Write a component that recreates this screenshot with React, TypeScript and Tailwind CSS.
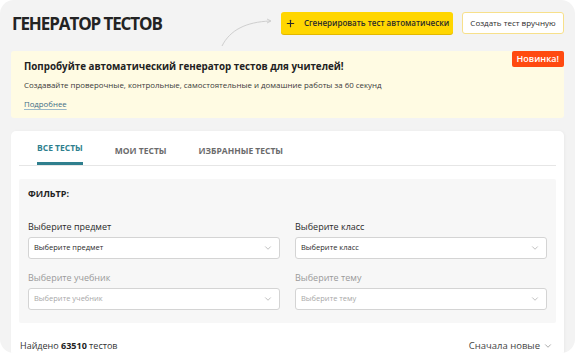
import React from 'react';
import { Plus, ChevronDown } from 'lucide-react';

const font = { fontFamily: '"Open Sans", "Noto Sans", sans-serif' };

const Select: React.FC<{ label: string; placeholder: string; disabled?: boolean }> = ({ label, placeholder, disabled }) => (
  <div className="flex flex-col">
    <div className={`text-[9px] leading-[13px] ${disabled ? 'text-[#9a9a9a]' : 'text-[#2b2b2b]'}`}>{label}</div>
    <div className="mt-[4px] h-[22px] bg-white border border-[#d4d4d4] rounded-[3px] flex items-center justify-between pl-[5px] pr-[6px]">
      <span className={`text-[7.5px] whitespace-nowrap ${disabled ? 'text-[#a8a8a8]' : 'text-[#2b2b2b]'}`}>{placeholder}</span>
      <ChevronDown size={10} strokeWidth={1.5} className="text-[#9a9a9a]" />
    </div>
  </div>
);

export default function App() {
  const tabs = ['ВСЕ ТЕСТЫ', 'МОИ ТЕСТЫ', 'ИЗБРАННЫЕ ТЕСТЫ'];

  return (
    <div className="w-[575px] h-[353px] bg-white" style={font}>
      <div className="relative h-full rounded-[14px] bg-[#f3f3f3] overflow-hidden px-[11px] pt-[12px]">
        {/* header */}
        <div className="flex items-center h-[22px]">
          <h1 className="pl-[1px] text-[17px] font-bold text-[#232323] leading-none tracking-[-1.1px] whitespace-nowrap">ГЕНЕРАТОР ТЕСТОВ</h1>
          <div className="ml-auto flex items-center gap-[9px]">
            <button className="h-[22px] w-[172px] rounded-[3px] bg-[#ffd600] shadow-[0_1px_0_#e2b800] flex items-center justify-center gap-[8px] text-[8px] font-semibold text-[#2b2b2b] whitespace-nowrap">
              <Plus size={11} strokeWidth={2.5} className="shrink-0" />
              Сгенерировать тест автоматически
            </button>
            <button className="h-[22px] w-[102px] rounded-[3px] bg-white border border-[#f7e08a] flex items-center justify-center text-[8px] text-[#2b2b2b] whitespace-nowrap">
              Создать тест вручную
            </button>
          </div>
        </div>

        <svg className="absolute left-[220px] top-[16px]" width="56" height="32" viewBox="0 0 56 32" fill="none">
          <path d="M2 30 C 10 14, 26 6, 50 5" stroke="#c9c9c9" strokeWidth="0.9" />
          <path d="M47 3 L51 5 L47 7" stroke="#c9c9c9" strokeWidth="0.9" />
        </svg>

        {/* banner */}
        <div className="relative mt-[17px] h-[67px] bg-[#fffbe3] rounded-[3px] pl-[13px] pt-[8px]">
          <div className="text-[9.8px] font-bold text-[#222] leading-[16px]">
            Попробуйте автоматический генератор тестов для учителей!
          </div>
          <div className="mt-[4px] text-[7.9px] text-[#3a3a3a] leading-[12px]">
            Создавайте проверочные, контрольные, самостоятельные и домашние работы за 60 секунд
          </div>
          <div className="mt-[7px] text-[7.8px] text-[#3d6b85] leading-[12px] underline decoration-[#9ab8c8] underline-offset-2">
            Подробнее
          </div>
          <div className="absolute right-0 top-0 h-[16px] px-[5px] bg-[#ff4a10] rounded-[2px] text-white text-[9px] font-semibold flex items-center">
            Новинка!
          </div>
        </div>

        {/* card */}
        <div className="mt-[13px] bg-white rounded-t-[5px] shadow-[1px_0_3px_rgba(0,0,0,0.04)] px-[8px] h-[240px]">
          <div className="flex border-b border-[#e6e6e6] pl-[18px] gap-[32px] h-[35px] items-end">
            {tabs.map((t, i) => (
              <div
                key={t}
                className={`pb-[8px] text-[8.5px] font-bold leading-[12px] ${
                  i === 0 ? 'text-[#2f7f8e] border-b-[3px] border-[#2f7f8e] pb-[5px]' : 'text-[#6b6b6b]'
                }`}
              >
                {t}
              </div>
            ))}
          </div>

          <div className="mt-[13px] bg-[#f7f7f7] rounded-[2px] px-[9px] pt-[8px] pb-[13px]">
            <div className="text-[9px] font-bold text-[#222] leading-[13px]">ФИЛЬТР:</div>
            <div className="mt-[20px] grid grid-cols-2 gap-x-[15px] gap-y-[12px]">
              <Select label="Выберите предмет" placeholder="Выберите предмет" />
              <Select label="Выберите класс" placeholder="Выберите класс" />
              <Select label="Выберите учебник" placeholder="Выберите учебник" disabled />
              <Select label="Выберите тему" placeholder="Выберите тему" disabled />
            </div>
          </div>

          <div className="mt-[16px] flex items-center justify-between pl-[1px] pr-[3px]">
            <div className="text-[9px] text-[#333]">
              Найдено <span className="font-bold text-[#222]">63510</span> тестов
            </div>
            <div className="flex items-center gap-[3px] text-[9.5px] text-[#444]">
              Сначала новые
              <ChevronDown size={10} strokeWidth={1.5} className="text-[#777]" />
            </div>
          </div>
        </div>
      </div>
    </div>
  );
}
